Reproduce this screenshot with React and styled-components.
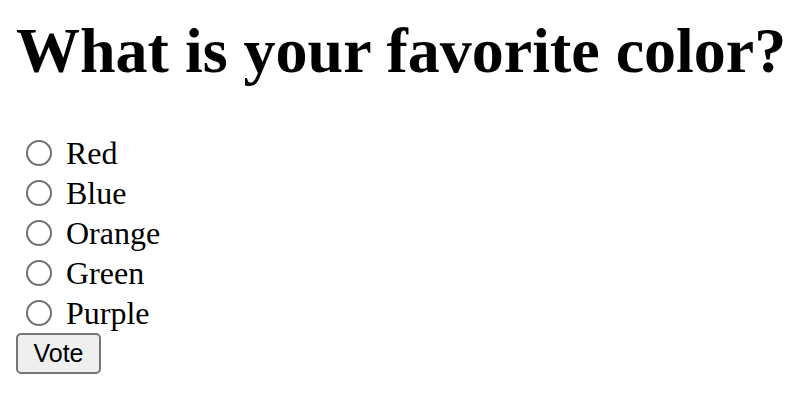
import styled, { createGlobalStyle } from 'styled-components';

const options = ['Red', 'Blue', 'Orange', 'Green', 'Purple'];

export default function App() {
  return (
    <>
      <GlobalStyle />
      <Page>
        <Title>What is your favorite color?</Title>
        <Form onSubmit={(e) => e.preventDefault()}>
          {options.map((color) => (
            <Option key={color}>
              <Radio type="radio" name="color" value={color} />
              {color}
            </Option>
          ))}
          <VoteButton type="submit">Vote</VoteButton>
        </Form>
      </Page>
    </>
  );
}

const GlobalStyle = createGlobalStyle`
  html, body {
    margin: 0;
    background: #fff;
  }
`;

const Page = styled.div`
  padding: 14px 16px 0 16px;
  font-family: "Liberation Serif", "Times New Roman", serif;
  color: #000;
`;

const Title = styled.h1`
  font-size: 64px;
  font-weight: 700;
  line-height: 74px;
  margin: 0 0 45px 0;
  white-space: nowrap;
`;

const Form = styled.form`
  display: flex;
  flex-direction: column;
  align-items: flex-start;
`;

const Option = styled.label`
  display: flex;
  align-items: center;
  height: 40px;
  font-size: 32px;
  line-height: 40px;
`;

const Radio = styled.input`
  appearance: none;
  -webkit-appearance: none;
  box-sizing: border-box;
  width: 26px;
  height: 26px;
  margin: 0 14px 0 10px;
  border: 2px solid #707070;
  border-radius: 50%;
  background: #fff;
  &:checked {
    background: radial-gradient(circle, #0075ff 0 6px, #fff 7px);
    border-color: #0075ff;
  }
`;

const VoteButton = styled.button`
  box-sizing: border-box;
  width: 85px;
  height: 41px;
  padding: 0;
  margin: 0;
  border: 2px solid #767676;
  border-radius: 5px;
  background: #efefef;
  color: #000;
  font-family: "Liberation Sans", Arial, sans-serif;
  font-size: 25px;
  cursor: pointer;
`;
